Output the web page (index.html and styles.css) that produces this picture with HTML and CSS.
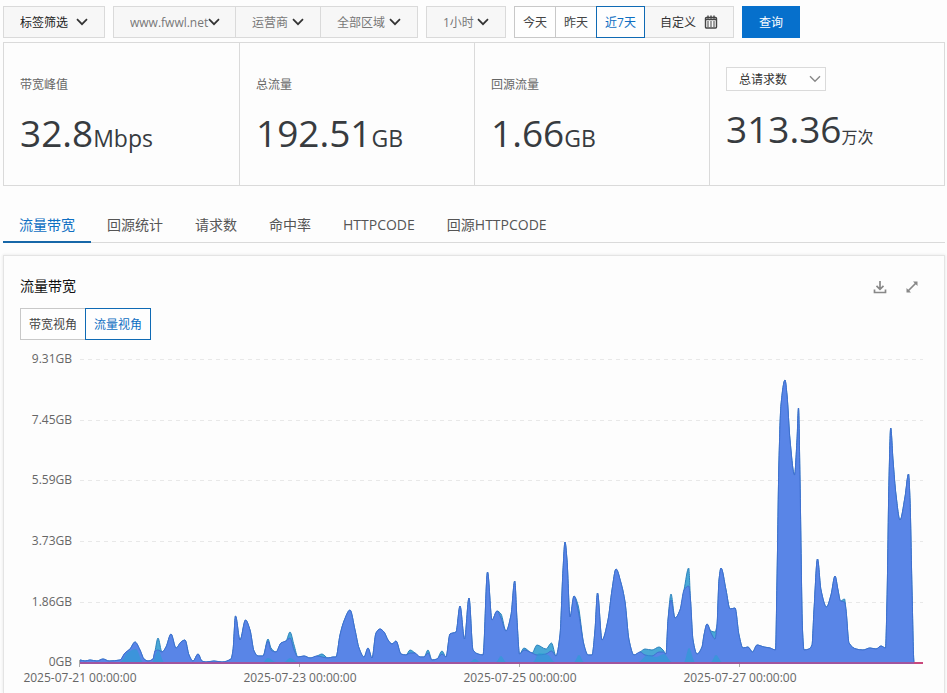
FILE: index.html
```html
<!DOCTYPE html>
<html lang="zh-CN">
<head>
<meta charset="utf-8">
<title>流量带宽</title>
<link rel="stylesheet" href="styles.css">
</head>
<body>
<svg class="defs" width="0" height="0" aria-hidden="true">
  <symbol id="chevron" viewBox="0 0 12 8"><path d="M1 1.2 6 6.2 11 1.2"/></symbol>
</svg>

<form class="toolbar">
  <span class="picker picker-dark">
    <select aria-label="标签筛选"><option>标签筛选</option></select>
    <svg class="chevron"><use href="#chevron"/></svg>
  </span>
  <div class="group">
    <span class="picker picker-domain">
      <select aria-label="域名"><option>www.fwwl.net</option></select>
      <svg class="chevron"><use href="#chevron"/></svg>
    </span>
    <span class="picker">
      <select aria-label="运营商"><option>运营商</option></select>
      <svg class="chevron"><use href="#chevron"/></svg>
    </span>
    <span class="picker">
      <select aria-label="区域"><option>全部区域</option></select>
      <svg class="chevron"><use href="#chevron"/></svg>
    </span>
  </div>
  <span class="picker">
    <select aria-label="时间粒度"><option>1小时</option></select>
    <svg class="chevron"><use href="#chevron"/></svg>
  </span>
  <div class="group">
    <button type="button" class="option">今天</button>
    <button type="button" class="option">昨天</button>
    <button type="button" class="option selected">近7天</button>
    <button type="button" class="option custom">自定义
      <svg class="calendar" viewBox="0 0 14 14"><rect class="frame" x="1.500" y="2.500" width="11" height="10.500" rx="1"/><path class="frame" d="M1.500 4.500h11M4 .5v3M7 .5v3M10 .5v3"/><path class="days" d="M3 7h8M3 9h8M3 11h8"/></svg>
    </button>
  </div>
  <button type="button" class="submit">查询</button>
</form>

<section class="stats">
  <div class="stat"><h2>带宽峰值</h2><p>32.8<small>Mbps</small></p></div>
  <div class="stat"><h2>总流量</h2><p>192.51<small>GB</small></p></div>
  <div class="stat"><h2>回源流量</h2><p>1.66<small>GB</small></p></div>
  <div class="stat stat-select">
    <span class="picker picker-small">
      <select aria-label="请求指标"><option>总请求数</option></select>
      <svg class="chevron"><use href="#chevron"/></svg>
    </span>
    <p>313.36<small class="unit-cjk">万次</small></p>
  </div>
</section>

<nav class="tabs">
  <a href="#traffic" class="active">流量带宽</a>
  <a href="#origin">回源统计</a>
  <a href="#requests">请求数</a>
  <a href="#hits">命中率</a>
  <a href="#codes">HTTPCODE</a>
  <a href="#origin-codes">回源HTTPCODE</a>
</nav>

<main class="card" id="traffic">
  <header>
    <h1>流量带宽</h1>
    <div class="actions">
      <button type="button" aria-label="下载"><svg viewBox="0 0 14 14"><path d="M7 1v8M3.5 5.8 7 9.3l3.500-3.500M1.500 9.500v3h11v-3"/></svg></button>
      <button type="button" aria-label="全屏"><svg viewBox="0 0 14 14"><path d="M3 11 11 3"/><path class="solid" d="M8 1.500h4.500V6zM1.500 8v4.500H6z"/></svg></button>
    </div>
  </header>
  <div class="group views">
    <button type="button" class="option">带宽视角</button>
    <button type="button" class="option selected">流量视角</button>
  </div>
  <svg class="chart" viewBox="4 344 940 349" role="img" aria-label="流量趋势">
    <path class="grid" d="M80 359.500H923M80 420.500H923M80 480.500H923M80 541.500H923M80 602.500H923"/>
    <g class="y-labels">
      <text x="72" y="363">9.31GB</text>
      <text x="72" y="424">7.45GB</text>
      <text x="72" y="484">5.59GB</text>
      <text x="72" y="545">3.73GB</text>
      <text x="72" y="606">1.86GB</text>
      <text x="72" y="666">0GB</text>
    </g>
    <path class="area-total" id="total"/>
    <path class="area-main" id="main"/>
    <path class="area-low" id="low"/>
    <path class="ticks" d="M79.500 660V667M299.500 663V667M519.500 663V667M739.500 663V667"/>
    <path class="axis" d="M80 663H914"/>
    <path class="axis-end" d="M914 663H923"/>
    <g class="x-labels">
      <text x="80" y="682">2025-07-21 00:00:00</text>
      <text x="300" y="682">2025-07-23 00:00:00</text>
      <text x="520" y="682">2025-07-25 00:00:00</text>
      <text x="740" y="682">2025-07-27 00:00:00</text>
    </g>
  </svg>
</main>
<script src="chart.js"></script>
</body>
</html>
```
FILE: styles.css
```css
* { box-sizing: border-box; }
body {
  margin: 0;
  padding: 6px 2px 0 3px;
  background: #fdfdfd;
  color: #333;
  font: 12px/16px "Open Sans", "Noto Sans CJK SC", sans-serif;
}
.defs { position: absolute; }
h1, h2, p { margin: 0; font-weight: 400; }
button, select { font: inherit; color: inherit; margin: 0; }

.toolbar { display: flex; gap: 8px; height: 32px; }
.group { display: flex; }
.group > * + * { margin-left: -1px; }

.picker {
  display: inline-grid;
  align-items: center;
  height: 32px;
  border: 1px solid #dadada;
  background: #f7f7f7;
  color: #777;
}
.picker > * { grid-area: 1 / 1; }
.picker select {
  appearance: none;
  height: 30px;
  border: 0;
  padding: 2px 31px 0 16px;
  background: transparent;
}
.picker-dark { color: #222; }
.picker-dark select { padding-right: 35px; }
.picker-domain select { padding-right: 26px; }
.chevron {
  justify-self: end;
  width: 12px;
  height: 8px;
  margin-right: 16px;
  fill: none;
  stroke: #333;
  stroke-width: 1.7;
  pointer-events: none;
}
.picker-domain .chevron { margin-right: 15px; }

.option {
  height: 32px;
  padding: 2px 8px 0;
  border: 1px solid #c8c8c8;
  background: #fefefe;
  color: #444;
}
.option.selected {
  z-index: 1;
  border-color: #0f6ab4;
  color: #0f6fc2;
}
.custom {
  display: flex;
  align-items: center;
  gap: 8px;
  padding: 2px 15px 0;
  border-color: #dadada;
  background: #f7f7f7;
  color: #333;
}
.calendar { width: 14px; height: 14px; margin-bottom: 2px; fill: none; stroke: #444; }
.calendar .frame { stroke-width: 1.4; }
.calendar .days { stroke-dasharray: 2 1; }
.submit {
  padding: 2px 17px 0;
  border: 0;
  background: #0670cc;
  color: #fff;
}

.stats {
  display: grid;
  grid-template-columns: repeat(4, 1fr);
  height: 144px;
  margin-top: 4px;
  border: 1px solid #dadada;
}
.stat { padding: 34px 16px 0; }
.stat + .stat { border-left: 1px solid #dadada; }
.stat h2 { font-size: 12px; line-height: 16px; color: #666; }
.stat p { margin-top: 16px; font-size: 37px; line-height: 48px; color: #373b3f; }
.stat small { font-size: 23px; }
.stat .unit-cjk { font-size: 16px; }
.stat-select { padding-top: 24px; }
.stat-select p { margin-top: 14px; }
.picker-small { width: 100px; height: 24px; background: #fefefe; color: #333; }
.picker-small select { height: 22px; padding: 2px 20px 0 12px; }
.picker-small .chevron { margin-right: 4px; stroke: #888; stroke-width: 1.4; }

.tabs {
  display: flex;
  height: 37px;
  margin-top: 20px;
  border-bottom: 1px solid #dadada;
  font-size: 14px;
  line-height: 38px;
}
.tabs a { height: 37px; padding: 0 16px; color: #555; text-decoration: none; }
.tabs .active { border-bottom: 2px solid #1767a8; color: #0f6fc2; }

.card {
  margin-top: 12px;
  border: 1px solid #e4e4e4;
  border-bottom: 0;
  box-shadow: 0 0 3px #e4e4e4;
}
.card header {
  display: flex;
  justify-content: space-between;
  align-items: center;
  padding: 20px 24px 0 16px;
}
.card h1 { font-size: 14px; line-height: 20px; color: #111; }
.actions { display: flex; gap: 16px; padding-top: 2px; }
.actions button { width: 16px; height: 16px; padding: 1px; border: 0; background: none; }
.actions svg { display: block; width: 14px; height: 14px; fill: none; stroke: #888; stroke-width: 1.7; }
.actions .solid { fill: #888; stroke: none; }
.views { margin: 12px 16px 4px; }

.chart { display: block; width: 100%; }
.chart text { fill: #666; font-size: 12px; }
.y-labels { text-anchor: end; }
.x-labels { text-anchor: middle; }
.grid { stroke: #e8e8e8; stroke-dasharray: 4 4; }
.area-total { fill: #49a8d6; stroke: #2b83bd; }
.area-main { fill: #5985e7; stroke: #3f6fd0; }
.area-low { fill: #1fa4cf; fill-opacity: 0.5; }
.ticks { stroke: #aaa; }
.axis { stroke: #a0559f; stroke-width: 2; }
.axis-end { stroke: #c9487c; stroke-width: 2; }
```
FILE: chart.js
```js
const BASE = 663;

const total = [
  [80,660],[85,661],[90,660],[97,661],[103,659],[109,661],[120,660],[125,653],[130,649],[135,642],[140,650],[144,659],[148,661],[153,659],[155,651],[158,638],[162,652],[166,647],[171,634],[176,648],[181,642],[185,640],[189,655],[193,661],[198,654],[202,661],[206,662],[214,661],[222,662],[231,659],
  [233,650],[235.5,616],[240,640],[245.5,620],[250,630],[254,651],[258,656],[263,656],[268,639],[271,648],[276,652],[281,643],[286,641],[290,632],[294,645],[298,657],[304,656],[310,658],[317,656],[322,654],[328,658],[333,657],[336,657],[340,635],[344,621],[350,610],[355,630],[359,648],[364,657],[368,648],[372,658],[376,633],[380,629],[384,632],[388,640],[392,644],[396,641],[401,654],[406,655],[410,650],[415,653],[420,657],[424,657],[428,650],[432,660],[437,659],[442,651],[446,657],
  [450,634],[456,632],[460,606],[464.5,639],[469,598],[473,650],[478,654],[483,655],[487.5,572],[492,620],[497,611],[501,614],[506,631],[511,615],[514.7,581],[517,620],[519.5,654],[524,648],[532,653],[537,645],[546,649],[551.5,643],[556,656],[560,635],[563,570],[565,542],[567,560],[570,617],[574,596],[578,605],[584,645],[588,655],[592,655],[595,630],[597.5,593],[602,640],[608,620],[612,590],[616,569],[621,583],[625,602],[629,640],[634,655],[640,652],[645,649],[652,650],[659,647],[663,650],[666,654],
  [668,620],[671,594],[675,618],[680,610],[684,590],[688.7,568],[690.5,600],[693,640],[697,654],[702,647],[704,635],[707,624],[711,631],[715,632],[717,625],[719,580],[721,568],[726,590],[730,609],[735,608],[739,635],[743,648],[748,647],[752.5,652],[757,645],[764,647],[770,648],[775.5,650],
  [777,580],[779,460],[781,405],[785,380],[787,395],[790,440],[794.5,475],[797,440],[798.5,408],[800,480],[802.5,630],[804,650],[809,649],[812,645],[814,610],[817.5,559],[821,590],[826.5,607],[831,595],[835,576],[838,590],[840.5,601],[844.5,599],[846,610],[849,643],[856,649],[863,650],[870,648],[876,649],[881,646],[885.5,648],[887,600],[889,480],[890.7,428],[893,460],[896,495],[900,520],[905,497],[908.5,474],[910,500],[912,590],[914,662]
];

/* Points where the main series lies below the total. */
const lower = new Map([
  [158,650],[268,641],[271,650],[290,638],[294,650],[322,657],[410,653],[428,653],[442,654],
  [501,618],[524,650],[537,655],[546,654],[551.5,651],[578,610],[645,655],[652,656],[659,652],[663,652],
  [671,600],[688.7,586],[711,633],[715,639],[844.5,602]
]);
const main = total.map(([x, y]) => [x, lower.get(x) ?? y]);

const low = [
  [80,663],[120,662],[128,652],[136,649],[143,662],[152,662],[158,650],[164,662],[262,663],[268,658],[276,662],[284,662],[290,658],[298,662],
  [470,662],[475,659],[480,662],[496,662],[501,656],[506,662],[533,662],[539,653],[548,655],[555,662],[574,662],[579,655],[584,662],
  [638,662],[648,655],[656,657],[664,654],[672,662],[684,662],[689,648],[695,662],[711,662],[716,655],[722,662],[914,663]
];

/* Smooth path that never overshoots its own points. */
function area(points) {
  const n = points.length;
  const slope = i => (points[i + 1][1] - points[i][1]) / (points[i + 1][0] - points[i][0]);
  const tangent = i => {
    if (i === 0 || i === n - 1) return 0;
    const a = slope(i - 1), b = slope(i);
    return a * b <= 0 ? 0 : 2 * a * b / (a + b);
  };
  let d = `M${points[0][0]} ${BASE}V${points[0][1]}`;
  for (let i = 0; i < n - 1; i++) {
    const [x0, y0] = points[i], [x1, y1] = points[i + 1];
    const h = (x1 - x0) / 3;
    d += `C${x0 + h} ${y0 + tangent(i) * h} ${x1 - h} ${y1 - tangent(i + 1) * h} ${x1} ${y1}`;
  }
  return d + `V${BASE}Z`;
}

document.getElementById("total").setAttribute("d", area(total));
document.getElementById("main").setAttribute("d", area(main));
document.getElementById("low").setAttribute("d", area(low));
```
